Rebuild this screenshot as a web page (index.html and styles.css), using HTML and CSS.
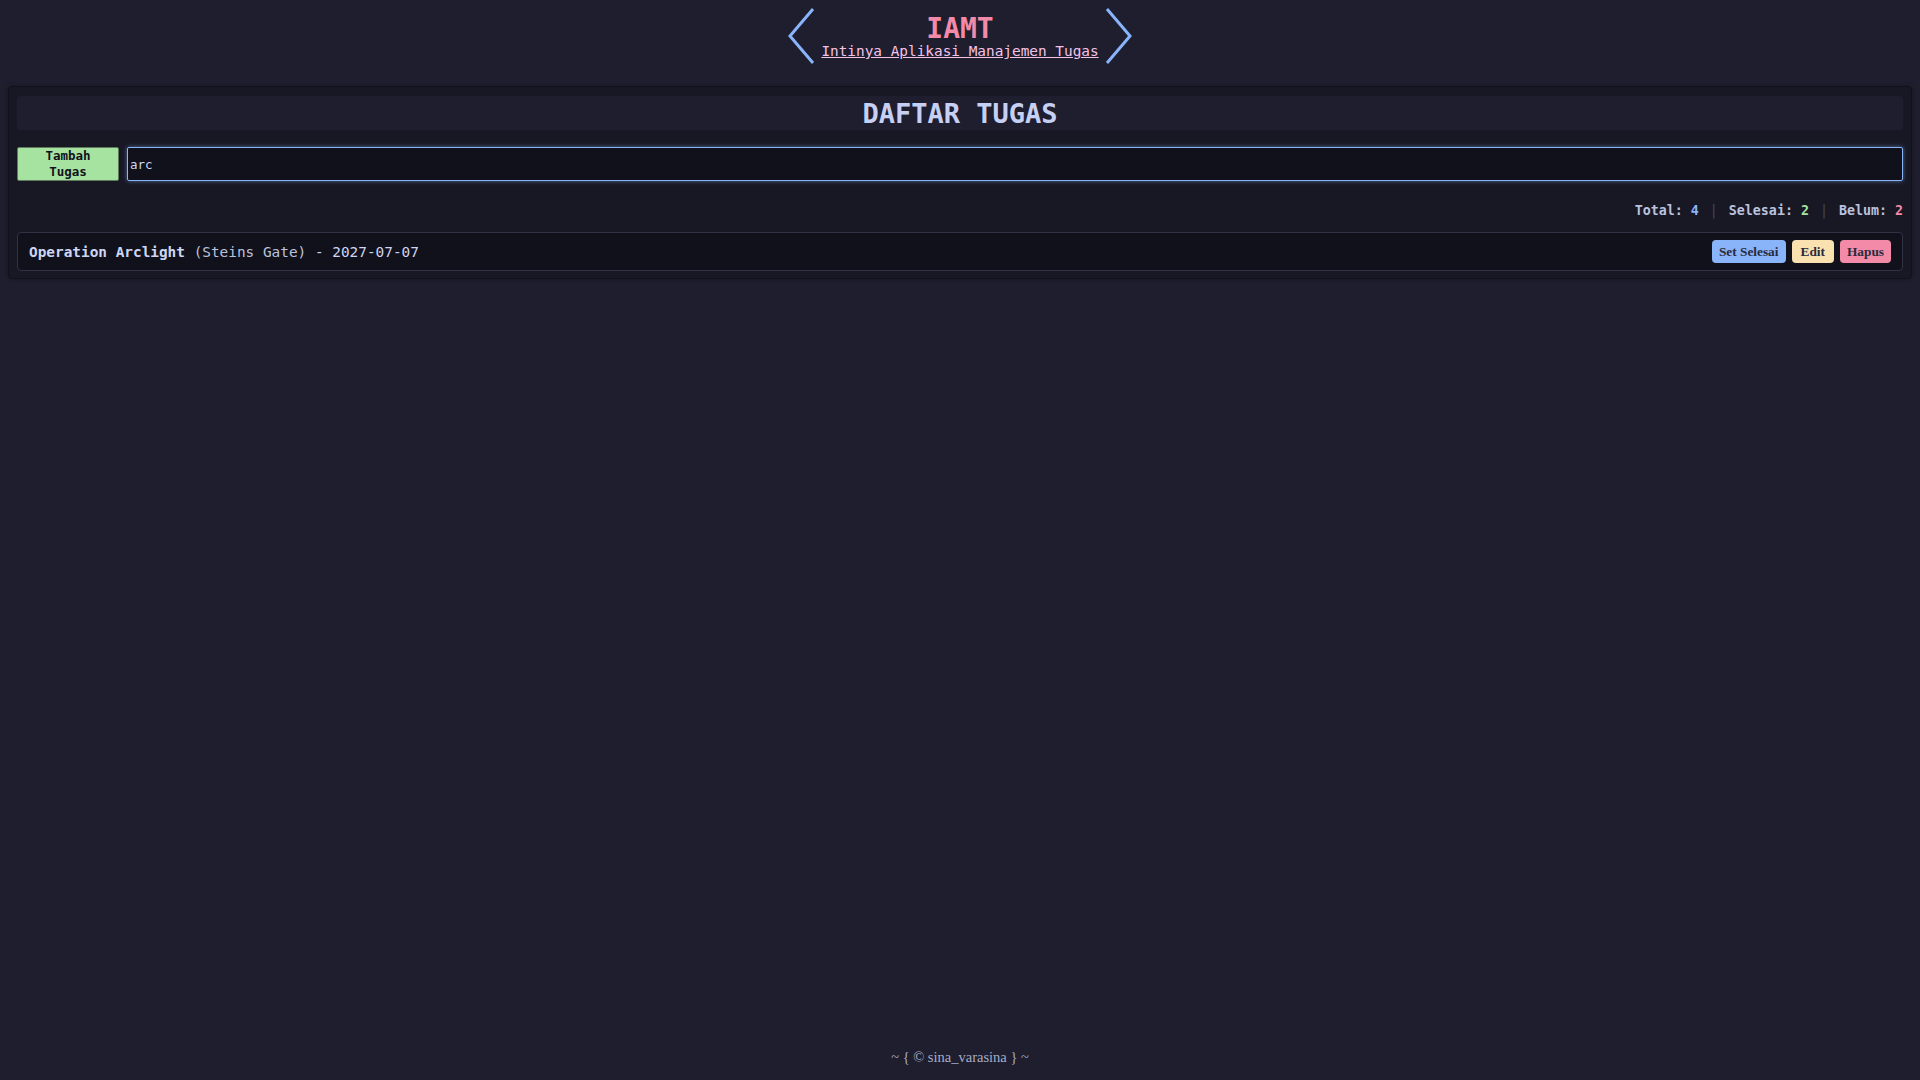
FILE: index.html
```html
<!DOCTYPE html>
<html lang="id">
<head>
<meta charset="utf-8">
<title>IAMT</title>
<link rel="stylesheet" href="styles.css">
</head>
<body>
<header class="top">
  <svg class="chev" viewBox="0 0 28 58" width="28" height="58"><polyline points="25,2 2,29 25,56" fill="none" stroke="#89b4fa" stroke-width="3"/></svg>
  <div class="brand">
    <div class="brand-title">IAMT</div>
    <a class="brand-sub" href="#">Intinya Aplikasi Manajemen Tugas</a>
  </div>
  <svg class="chev" viewBox="0 0 28 58" width="28" height="58"><polyline points="3,2 26,29 3,56" fill="none" stroke="#89b4fa" stroke-width="3"/></svg>
</header>

<main class="panel">
  <h1 class="panel-title">DAFTAR TUGAS</h1>
  <div class="form-row">
    <button class="btn-add">Tambah<br>Tugas</button>
    <input class="search" type="text" value="arc">
  </div>
  <div class="stats"><span class="lbl">Total: <span class="n-blue">4</span></span><span class="sep">|</span><span class="lbl">Selesai: <span class="n-green">2</span></span><span class="sep">|</span><span class="lbl">Belum: <span class="n-red">2</span></span></div>
  <ul class="tasks">
    <li class="task">
      <div class="task-text"><strong class="task-name">Operation Arclight</strong> <span class="task-cat">(Steins Gate)</span> - 2027-07-07</div>
      <div class="task-actions">
        <button class="act act-done">Set Selesai</button>
        <button class="act act-edit">Edit</button>
        <button class="act act-del">Hapus</button>
      </div>
    </li>
  </ul>
</main>

<footer class="foot">~ { © sina_varasina } ~</footer>
</body>
</html>
```
FILE: styles.css
```css
html, body {
  margin: 0;
  padding: 0;
}
body {
  background: #1e1e2e;
  color: #cdd6f4;
  font-family: "DejaVu Sans Mono", "Liberation Mono", monospace;
  min-height: 100vh;
  display: flex;
  flex-direction: column;
}
.top {
  height: 86px;
  display: flex;
  align-items: center;
  justify-content: center;
  gap: 5px;
  box-sizing: border-box;
  padding-bottom: 14px;
}
.chev {
  display: block;
}
.brand {
  display: flex;
  flex-direction: column;
  align-items: center;
  padding-top: 2px;
}
.brand-title {
  color: #f38ba8;
  font-weight: bold;
  font-size: 28px;
  line-height: 28px;
}
.brand-sub {
  color: #f5c2e7;
  font-size: 14.4px;
  line-height: 16px;
  text-decoration: underline;
  text-decoration-color: #f5c2e7;
}
.panel {
  margin: 0 8px;
  background: #181825;
  border: 1px solid #11111b;
  border-radius: 4px;
  padding: 9px 8px 7px;
  box-shadow: 0 0 4px rgba(0,0,0,0.3);
}
.panel-title {
  margin: 0;
  background: #1e1e2e;
  border-radius: 4px;
  text-align: center;
  color: #c6d0f5;
  font-size: 27px;
  line-height: 36px;
  height: 34px;
}
.form-row {
  display: flex;
  gap: 8px;
  margin-top: 17px;
  height: 34px;
}
.btn-add {
  width: 102px;
  flex: none;
  background: #a6e3a1;
  border: 1px solid #5f7a5c;
  border-radius: 2px;
  color: #11111b;
  font-family: "DejaVu Sans Mono", monospace;
  font-weight: bold;
  font-size: 12.5px;
  line-height: 16px;
  padding: 0;
}
.search {
  flex: 1;
  background: #11111b;
  border: 1px solid #89b4fa;
  border-radius: 2px;
  box-shadow: 0 0 4px rgba(137,180,250,0.55);
  color: #cdd6f4;
  font-family: "DejaVu Sans Mono", monospace;
  font-size: 12.5px;
  padding: 0 2px;
  outline: none;
}
.stats {
  text-align: right;
  margin-top: 21px;
  font-size: 13.3px;
  font-weight: bold;
  line-height: 18px;
  color: #bac2de;
  white-space: nowrap;
}
.sep {
  color: #45475a;
  font-weight: normal;
  margin: 0 11px;
}
.n-blue { color: #89b4fa; }
.n-green { color: #a6e3a1; }
.n-red { color: #f38ba8; }
.tasks {
  list-style: none;
  margin: 12px 0 0;
  padding: 0;
}
.task {
  display: flex;
  align-items: center;
  justify-content: space-between;
  background: #11111b;
  border: 1px solid #313244;
  border-radius: 4px;
  height: 39px;
  box-sizing: border-box;
  padding: 0 11px;
}
.task-text {
  font-size: 14.4px;
  color: #cdd6f4;
  white-space: nowrap;
}
.task-name {
  color: #cdd6f4;
}
.task-cat {
  color: #bac2de;
}
.task-actions {
  display: flex;
  gap: 6px;
}
.act {
  font-family: "Liberation Serif", "Times New Roman", serif;
  font-weight: bold;
  font-size: 13.33px;
  height: 23px;
  padding: 0 7px;
  border: 0;
  border-radius: 4px;
  color: #2a2b3c;
  white-space: nowrap;
}
.act-done { background: #89b4fa; }
.act-edit { background: #f9e2af; padding: 0 9px; }
.act-del { background: #f38ba8; }
.foot {
  margin-top: auto;
  text-align: center;
  font-family: "Liberation Serif", "Times New Roman", serif;
  font-size: 14.5px;
  color: #a6adc8;
  padding-bottom: 14px;
}
```
